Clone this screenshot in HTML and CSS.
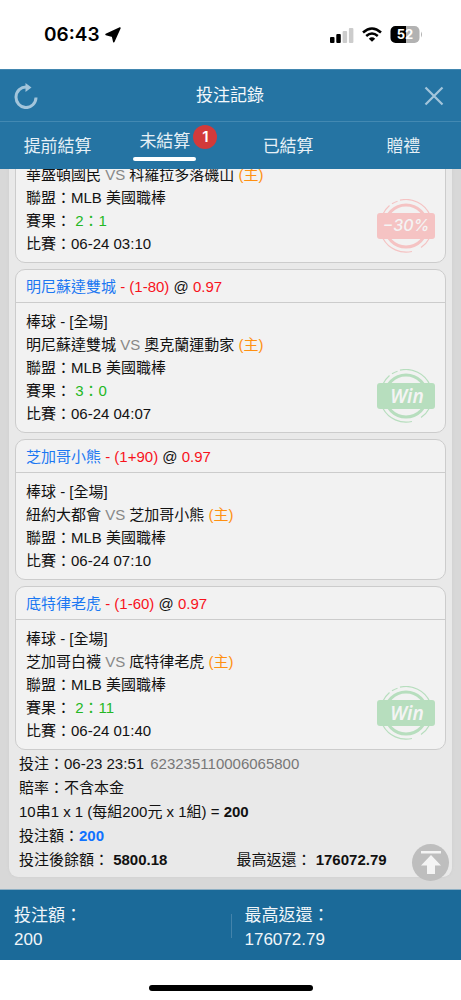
FILE: index.html
```html
<!DOCTYPE html>
<html lang="zh-Hant">
<head>
<meta charset="utf-8">
<meta name="viewport" content="width=device-width, initial-scale=1">
<title>投注記錄</title>
<link rel="stylesheet" href="styles.css">
</head>
<body>
<svg class="defs" aria-hidden="true">
  <symbol id="stamp" viewBox="0 0 60 54">
    <circle cx="30" cy="27" r="21" fill="none" stroke="currentColor" stroke-width="3"/>
    <path d="M24 1.2A26.3 26.3 0 0 1 54 16M16 4.8A26.3 26.3 0 0 1 21.500 2.200M7 15A26.3 26.3 0 0 1 13.500 6.500M7 39.500A26.3 26.3 0 0 0 36 52.500M45 48.500A26.3 26.3 0 0 0 53.500 39" fill="none" stroke="currentColor" stroke-width="1.200"/>
    <rect x="1" y="14" width="58" height="26" rx="3" fill="currentColor"/>
  </symbol>
</svg>

<div class="status">
  <div class="clock">
    <span>06:43</span>
    <svg width="16" height="16" viewBox="0 0 16 16" aria-hidden="true"><path d="M15 1 8.800 14.800 7.500 9.200 1 7.500z" stroke="#000" stroke-width="1.500" stroke-linejoin="round"/></svg>
  </div>
  <div class="indicators">
    <svg width="24" height="16" viewBox="0 0 24 16" aria-hidden="true"><rect x="0" y="10" width="4.500" height="6" rx="1"/><rect x="6.300" y="7" width="4.500" height="9" rx="1"/><g fill="#ccc"><rect x="12.600" y="4" width="4.500" height="12" rx="1"/><rect x="18.900" y="1" width="4.500" height="15" rx="1"/></g></svg>
    <svg width="20" height="15" viewBox="0 0 20 15" aria-hidden="true"><path d="M1 5.500Q10-2.500 19 5.500M4.200 9Q10 4 15.800 9" fill="none" stroke="#000" stroke-width="2.500"/><path d="M6.800 11.700Q10 9 13.200 11.700L10 14.800z"/></svg>
    <svg width="33" height="17" viewBox="0 0 33 17" aria-hidden="true"><path d="M16 0h8.500a5 5 0 0 1 5 5v7a5 5 0 0 1-5 5H16z" fill="#b2b2b2"/><path d="M16 0H5.500a5 5 0 0 0-5 5v7a5 5 0 0 0 5 5H16z"/><path d="M31 5.500q2 3 0 6z" fill="#b2b2b2"/><text class="battery-text" x="15" y="13" text-anchor="middle">52</text></svg>
  </div>
</div>

<header class="titlebar">
  <button class="icon-button" type="button" aria-label="重新整理">
    <svg width="24" height="26" viewBox="0 0 24 26" aria-hidden="true"><path d="M12.500 4A10 10.300 0 1 0 22 14.500" fill="none" stroke="#a3c5db" stroke-width="3"/><path d="M11.500 0 17.500 4.500 11.500 9z" fill="#a3c5db"/></svg>
  </button>
  <h1 class="title">投注記錄</h1>
  <button class="icon-button" type="button" aria-label="關閉">
    <svg width="20" height="20" viewBox="0 0 20 20" aria-hidden="true"><path d="M1.500 1.500 18.500 18.500M18.500 1.500 1.500 18.500" fill="none" stroke="#a3c5db" stroke-width="2.200"/></svg>
  </button>
</header>

<nav class="tabs">
  <button class="tab" type="button">提前結算</button>
  <button class="tab tab-active" type="button"><span class="tab-label">未結算<span class="badge">1</span></span></button>
  <button class="tab" type="button">已結算</button>
  <button class="tab" type="button">贈禮</button>
</nav>

<main class="records">
  <section class="slip">
    <article class="bet">
      <div class="bet-body">
        <p>華盛頓國民 <span class="versus">VS</span> 科羅拉多落磯山 <span class="home">(主)</span></p>
        <p>聯盟：MLB 美國職棒</p>
        <p>賽果： <span class="score">2：1</span></p>
        <p>比賽：06-24 03:10</p>
      </div>
      <svg class="stamp stamp-loss" width="60" height="54" viewBox="0 0 60 54"><use href="#stamp"/><text class="stamp-text" x="30" y="32" text-anchor="middle">−30%</text></svg>
    </article>

    <article class="bet">
      <h2 class="bet-head"><span class="team">明尼蘇達雙城</span> <span class="odds">- (1-80)</span> @ <span class="odds">0.97</span></h2>
      <div class="bet-body">
        <p>棒球 - [全場]</p>
        <p>明尼蘇達雙城 <span class="versus">VS</span> 奧克蘭運動家 <span class="home">(主)</span></p>
        <p>聯盟：MLB 美國職棒</p>
        <p>賽果： <span class="score">3：0</span></p>
        <p>比賽：06-24 04:07</p>
      </div>
      <svg class="stamp stamp-win" width="60" height="54" viewBox="0 0 60 54"><use href="#stamp"/><text class="stamp-word" x="31" y="34" text-anchor="middle">Win</text></svg>
    </article>

    <article class="bet">
      <h2 class="bet-head"><span class="team">芝加哥小熊</span> <span class="odds">- (1+90)</span> @ <span class="odds">0.97</span></h2>
      <div class="bet-body">
        <p>棒球 - [全場]</p>
        <p>紐約大都會 <span class="versus">VS</span> 芝加哥小熊 <span class="home">(主)</span></p>
        <p>聯盟：MLB 美國職棒</p>
        <p>比賽：06-24 07:10</p>
      </div>
    </article>

    <article class="bet">
      <h2 class="bet-head"><span class="team">底特律老虎</span> <span class="odds">- (1-60)</span> @ <span class="odds">0.97</span></h2>
      <div class="bet-body">
        <p>棒球 - [全場]</p>
        <p>芝加哥白襪 <span class="versus">VS</span> 底特律老虎 <span class="home">(主)</span></p>
        <p>聯盟：MLB 美國職棒</p>
        <p>賽果： <span class="score">2：11</span></p>
        <p>比賽：06-24 01:40</p>
      </div>
      <svg class="stamp stamp-win" width="60" height="54" viewBox="0 0 60 54"><use href="#stamp"/><text class="stamp-word" x="31" y="34" text-anchor="middle">Win</text></svg>
    </article>

    <div class="summary">
      <p>投注：06-23 23:51 <span class="order-id">623235110006065800</span></p>
      <p>賠率：不含本金</p>
      <p>10串1 x 1 (每組200元 x 1組) = <b>200</b></p>
      <p>投注額：<b class="stake">200</b></p>
      <div class="summary-row">
        <p>投注後餘額： <b>5800.18</b></p>
        <p>最高返還： <b>176072.79</b></p>
      </div>
    </div>
  </section>
  <button class="to-top" type="button" aria-label="回到頂部">
    <svg width="20" height="23" viewBox="0 0 20 23" aria-hidden="true"><path d="M0 0h20v2.500H0zM10 4 20 14.500H14V23H6V14.500H0z" fill="#f4f4f4"/></svg>
  </button>
</main>

<footer class="totals">
  <div class="total"><span>投注額：</span><span>200</span></div>
  <div class="total"><span>最高返還：</span><span>176072.79</span></div>
</footer>
<div class="home-area"><div class="home-bar"></div></div>
</body>
</html>
```

FILE: styles.css
```css
* {
  box-sizing: border-box;
}

body {
  margin: 0;
  height: 100vh;
  display: flex;
  flex-direction: column;
  overflow: hidden;
  background: #fff;
  color: #111;
  font: 15px/23px "Liberation Sans", "Noto Sans CJK TC", sans-serif;
}

h1, h2, p {
  margin: 0;
  font-weight: 400;
}

button {
  margin: 0;
  padding: 0;
  border: 0;
  background: none;
  color: inherit;
  font: inherit;
}

svg {
  display: block;
}

.defs {
  position: absolute;
  width: 0;
  height: 0;
}

.status {
  flex: none;
  height: 69px;
  padding: 0 38px 0 44px;
  display: flex;
  align-items: center;
  justify-content: space-between;
}

.clock {
  display: flex;
  align-items: center;
  gap: 5px;
  font: 600 19px/24px Inter, sans-serif;
  color: #000;
}

.indicators {
  display: flex;
  align-items: center;
  gap: 8px;
}

.battery-text {
  fill: #fff;
  font: 700 13px Inter, sans-serif;
}

.titlebar {
  flex: none;
  height: 53px;
  padding: 0 15px 0 14px;
  display: flex;
  align-items: center;
  justify-content: space-between;
  background: #2574a3;
  border-top: 1px solid #4287b0;
  border-bottom: 1px solid #4389b2;
}

.icon-button {
  width: 24px;
  height: 26px;
  display: flex;
  align-items: center;
  justify-content: center;
}

.title {
  color: #f4f8fb;
  font-size: 17px;
  line-height: 24px;
}

.tabs {
  flex: none;
  height: 47px;
  display: grid;
  grid-template-columns: repeat(4, 1fr);
  background: #2574a3;
  color: #e6f0f6;
  font-size: 17px;
  line-height: 24px;
}

.tab {
  padding-top: 2px;
}

.tab-active {
  padding: 0 16px 2px 0;
}

.tab-label {
  position: relative;
  display: inline-block;
  padding: 0 6px 3px;
}

.tab-label::after {
  content: "";
  display: block;
  height: 4px;
  margin: 3px -6px -4px;
  border-radius: 2px;
  background: #fff;
}

.badge {
  position: absolute;
  top: -5px;
  right: -21px;
  width: 24px;
  height: 24px;
  border-radius: 50%;
  background: #d33a3a;
  color: #fff;
  font: 600 15px/24px Inter, sans-serif;
  text-align: center;
}

.records {
  position: relative;
  flex: 1 1 0;
  min-height: 0;
  padding: 0 9px 12px;
  display: flex;
  flex-direction: column;
  justify-content: flex-end;
  overflow: hidden;
  background: #d8d8d8;
}

.slip {
  flex: none;
  padding: 6px 6px 5px;
  border-radius: 9px;
  background: #e9e9e9;
  box-shadow: 0 0 3px #ccc;
}

.bet {
  position: relative;
  border: 1px solid #ccc;
  border-radius: 10px;
  background: #f2f2f2;
}

.bet + .bet {
  margin-top: 6px;
}

.bet-head {
  padding: 5px 10px 4px;
  border-bottom: 1px solid #ccc;
  font-size: 15px;
}

.bet-body {
  padding: 7px 10px;
}

.team {
  color: #1c78f2;
}

.odds {
  color: #f8121c;
}

.versus {
  color: #888;
}

.home {
  color: #ff9010;
}

.score {
  color: #24b824;
}

.stamp {
  position: absolute;
  right: 9px;
  bottom: 9px;
}

.stamp-loss {
  color: #f5c3c3;
}

.stamp-win {
  color: #b7debe;
}

.stamp-text {
  fill: #f4f4f4;
  font: italic 500 16px Inter, sans-serif;
}

.stamp-word {
  fill: #f4f4f4;
  font: italic 600 19px "Noto Sans", "Open Sans", sans-serif;
}

.summary {
  padding: 2px 4px 0;
  line-height: 24px;
}

.order-id {
  margin-left: 2px;
  color: #777;
}

.stake {
  color: #0f72ff;
}

.summary-row {
  display: grid;
  grid-template-columns: 1fr 1fr;
  column-gap: 12px;
}

.to-top {
  position: absolute;
  right: 12px;
  bottom: 8px;
  width: 37px;
  height: 37px;
  border-radius: 50%;
  background: #bebebe;
  display: flex;
  align-items: center;
  justify-content: center;
}

.totals {
  flex: none;
  padding: 14px 0 8px;
  display: grid;
  grid-template-columns: 1fr 1fr;
  border-top: 1px solid #8fb0c4;
  background: #1b6a99;
  color: #f1f6f9;
  font-size: 17px;
  line-height: 24px;
}

.total {
  position: relative;
  padding: 0 14px;
  display: flex;
  flex-direction: column;
}

.total + .total::before {
  content: "";
  position: absolute;
  top: 10px;
  left: 0;
  width: 1px;
  height: 24px;
  background: #4383ab;
}

.home-area {
  flex: none;
  height: 40px;
  padding-top: 25px;
  display: flex;
  justify-content: center;
}

.home-bar {
  width: 164px;
  height: 6px;
  border-radius: 3px;
  background: #000;
}
```
